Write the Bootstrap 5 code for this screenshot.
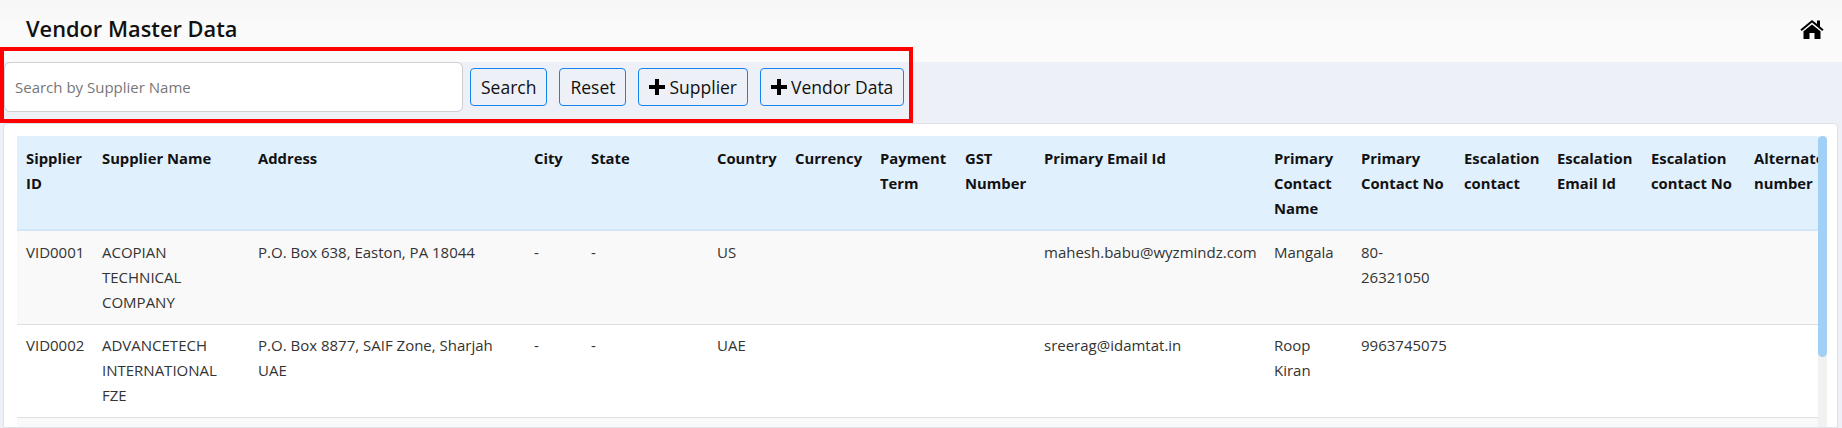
<!DOCTYPE html>
<html lang="en">
<head>
  <meta charset="UTF-8">
  <title>Vendor Master Data</title>
  <link href="https://cdn.jsdelivr.net/npm/bootstrap@5.3.7/dist/css/bootstrap.min.css" rel="stylesheet">
  <style>
    html, body { height: 428px; overflow: hidden; }
    body { background: #edf0f7; font-family: "Open Sans", sans-serif; font-size: 15px; color: #333; position: relative; padding-left: 3px; }
    .page-head { height: 62px; margin-left: -3px; padding: 0 18px 4px 26px; background: linear-gradient(#f6f6f7, #fafafa 24px); }
    .page-head h1 { font-size: 21.8px; font-weight: 600; color: #111; margin: 0; }
    .tool-row { height: 61px; padding: 0 0 11px 1px; gap: 7px; }
    .search-box { width: 459px; height: 50px; flex: none; font-size: 15px; padding-left: 10px; border-color: #cfcfd4; border-radius: 6px; }
    .search-box::placeholder { color: #777; }
    .tool-btn { height: 38px; padding: 0 10px; font-size: 17.5px; line-height: 36px; color: #111; border-color: #1383f2; border-radius: 4px; background: transparent; }
    .tool-btn svg { margin-right: 4px; vertical-align: -1px; }
    .ms-gap { margin-left: 5px; }
    .table-card { width: 1835px; height: 305px; padding: 12px 0 0 13px; border-radius: 4px 4px 0 0; border-color: #dfe1e6; position: relative; overflow: hidden; }
    .table-clip { width: 1801px; height: 293px; overflow: hidden; }
    .vendor-table { table-layout: fixed; width: 1850px; margin: 0; font-size: 15px; line-height: 25px; color: #333; --bs-table-bg: transparent; }
    .vendor-table th, .vendor-table td { padding: 8.5px 4px 9px 9px; border-bottom: 1px solid #dedfe3; }
    .vendor-table thead th { padding-top: 10px; padding-bottom: 8px; background: #e1f0fd; color: #111; font-size: 14.8px; font-weight: 700; vertical-align: top; border-bottom: 2px solid #d3e7f9; }
    .vendor-table tbody tr:nth-child(odd) td { background: #f9f9f9; }
    .scroll-track { position: absolute; left: 1814px; top: 12px; bottom: 0; width: 9px; background: #f1f1f1; }
    .scroll-thumb { height: 221px; background: #a0d0f5; border-radius: 5px; }
    .red-mark { position: absolute; left: 0; top: 47px; width: 913px; height: 76px; border: 4px solid #f00; pointer-events: none; }
  </style>
</head>
<body>
  <div class="page-head d-flex align-items-center justify-content-between">
    <h1>Vendor Master Data</h1>
    <svg width="24" height="20" viewBox="0 0 24 20" fill="#000" aria-label="Home">
      <path d="M12 1 .4 10.4l1.3 1.5L12 3.6l10.3 8.3 1.3-1.5L20 7.4V1.4h-3v3.5z"/>
      <path d="M12 5.4 3.5 12.3V20h6v-6h5v6h6v-7.7z"/>
    </svg>
  </div>

  <div class="tool-row d-flex align-items-center">
    <input type="text" class="form-control search-box" placeholder="Search by Supplier Name">
    <button class="btn tool-btn">Search</button>
    <button class="btn tool-btn ms-gap">Reset</button>
    <button class="btn tool-btn ms-gap"><svg width="16" height="16" viewBox="0 0 16 16" fill="#000"><path d="M6 0h4v6h6v4h-6v6H6v-6H0V6h6z"/></svg>Supplier</button>
    <button class="btn tool-btn ms-gap"><svg width="16" height="16" viewBox="0 0 16 16" fill="#000"><path d="M6 0h4v6h6v4h-6v6H6v-6H0V6h6z"/></svg>Vendor Data</button>
  </div>

  <div class="card table-card">
    <div class="table-clip">
      <table class="table vendor-table">
        <colgroup>
          <col style="width:76px"><col style="width:156px"><col style="width:276px"><col style="width:57px">
          <col style="width:126px"><col style="width:78px"><col style="width:85px"><col style="width:85px">
          <col style="width:79px"><col style="width:230px"><col style="width:87px"><col style="width:103px">
          <col style="width:93px"><col style="width:94px"><col style="width:103px"><col style="width:122px">
        </colgroup>
        <thead>
          <tr>
            <th>Sipplier ID</th><th>Supplier Name</th><th>Address</th><th>City</th><th>State</th><th>Country</th>
            <th>Currency</th><th>Payment Term</th><th>GST Number</th><th>Primary Email Id</th>
            <th>Primary Contact Name</th><th>Primary Contact No</th><th>Escalation contact</th>
            <th>Escalation Email Id</th><th>Escalation contact No</th><th>Alternate number</th>
          </tr>
        </thead>
        <tbody>
          <tr>
            <td>VID0001</td><td>ACOPIAN TECHNICAL COMPANY</td><td>P.O. Box 638, Easton, PA 18044</td><td>-</td><td>-</td><td>US</td>
            <td></td><td></td><td></td><td>mahesh.babu@wyzmindz.com</td><td>Mangala</td><td>80-26321050</td><td></td><td></td><td></td><td></td>
          </tr>
          <tr>
            <td>VID0002</td><td>ADVANCETECH INTERNATIONAL FZE</td><td>P.O. Box 8877, SAIF Zone, Sharjah UAE</td><td>-</td><td>-</td><td>UAE</td>
            <td></td><td></td><td></td><td>sreerag@idamtat.in</td><td>Roop Kiran</td><td>9963745075</td><td></td><td></td><td></td><td></td>
          </tr>
          <tr>
            <td>&nbsp;</td><td></td><td></td><td></td><td></td><td></td><td></td><td></td><td></td><td></td><td></td><td></td><td></td><td></td><td></td><td></td>
          </tr>
        </tbody>
      </table>
    </div>
    <div class="scroll-track"><div class="scroll-thumb"></div></div>
  </div>

  <div class="red-mark"></div>

  <script src="https://cdn.jsdelivr.net/npm/bootstrap@5.3.7/dist/js/bootstrap.bundle.min.js"></script>
</body>
</html>
